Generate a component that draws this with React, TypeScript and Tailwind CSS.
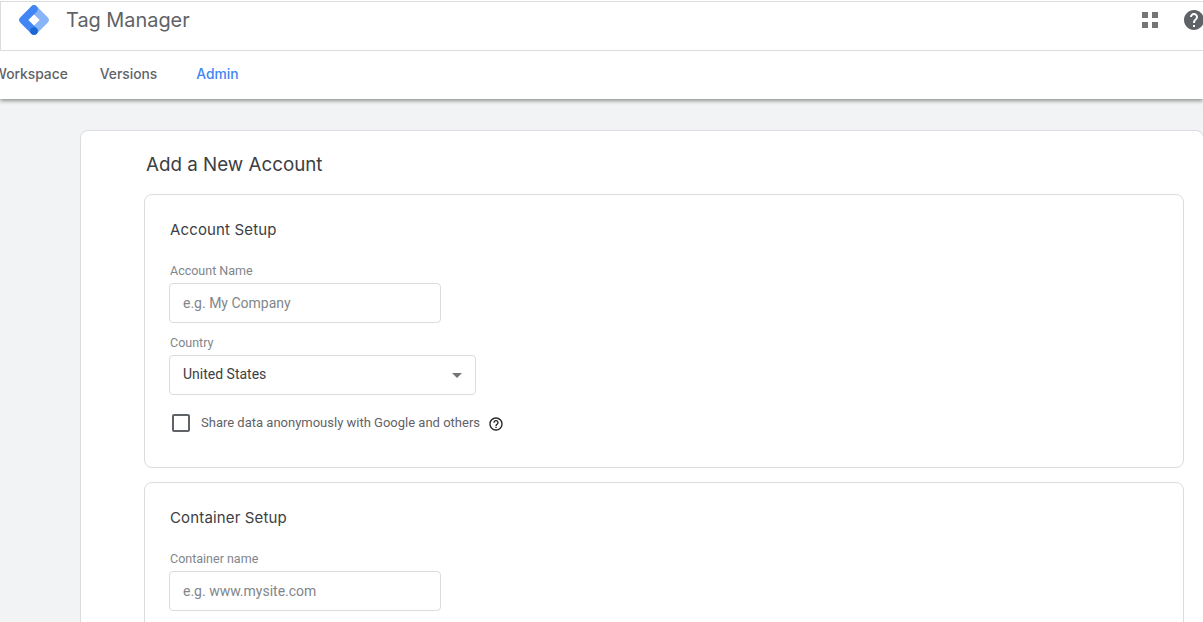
const labelClass = "block text-[12.5px] leading-[14px] text-[#80868b] font-['Roboto',sans-serif]";
const inputClass =
  "block h-10 w-[272px] rounded border border-[#dadce0] bg-white px-[13px] text-sm text-[#3c4043] outline-none placeholder:text-[#80868b] font-['Roboto',sans-serif]";
const cardTitleClass = "ml-px text-[15px] leading-5 tracking-[0.15px] text-[#3c4043] font-['Inter',sans-serif]";

function Logo() {
  return (
    <svg width="30" height="30" viewBox="0 0 30 30" className="shrink-0">
      <path d="M15 4 L26 15 L15 26" fill="none" stroke="#8ab4f8" strokeWidth="7.5" strokeLinejoin="round" strokeLinecap="round" />
      <path d="M15 4 L4 15 L15 26" fill="none" stroke="#4285f4" strokeWidth="7.5" strokeLinejoin="round" strokeLinecap="round" />
      <circle cx="15" cy="26" r="3.8" fill="#1967d2" />
    </svg>
  );
}

function AppsIcon() {
  return (
    <div className="grid shrink-0 grid-cols-[6px_6px] grid-rows-[6px_6px] gap-1">
      <span className="bg-[#757575]" />
      <span className="bg-[#757575]" />
      <span className="bg-[#757575]" />
      <span className="bg-[#757575]" />
    </div>
  );
}

function HelpFilled() {
  return (
    <svg width="24" height="24" viewBox="0 0 24 24" fill="#5f6368" className="shrink-0">
      <path d="M12 2C6.48 2 2 6.48 2 12s4.48 10 10 10 10-4.48 10-10S17.52 2 12 2zm1 17h-2v-2h2v2zm2.07-7.75l-.9.92C13.45 12.9 13 13.5 13 15h-2v-.5c0-1.1.45-2.1 1.17-2.83l1.24-1.26c.37-.36.59-.86.59-1.41 0-1.1-.9-2-2-2s-2 .9-2 2H8c0-2.21 1.79-4 4-4s4 1.79 4 4c0 .88-.36 1.68-.93 2.25z" />
    </svg>
  );
}

function HelpOutline() {
  return (
    <svg width="16" height="16" viewBox="0 0 24 24" fill="#202124" className="shrink-0">
      <path d="M11 18h2v-2h-2v2zm1-16C6.48 2 2 6.48 2 12s4.48 10 10 10 10-4.48 10-10S17.52 2 12 2zm0 18c-4.41 0-8-3.59-8-8s3.59-8 8-8 8 3.59 8 8-3.59 8-8 8zm0-14c-2.21 0-4 1.79-4 4h2c0-1.1.9-2 2-2s2 .9 2 2c0 2-3 1.75-3 5h2c0-2.25 3-2.5 3-5 0-2.21-1.79-4-4-4z" />
    </svg>
  );
}

export default function App() {
  return (
    <div className="h-screen overflow-hidden bg-[#f1f3f4]">
      <div className="relative z-10 bg-white pt-px shadow-[0_2px_4px_rgba(0,0,0,0.4)]">
        <header className="flex h-[50px] items-center overflow-hidden border-y border-l border-[#dcdcdc] pb-[12px] pl-[18px]">
          <Logo />
          <span className="ml-[17px] text-[19.9px] leading-7 text-[#5f6368] font-['Inter',sans-serif]">Tag Manager</span>
          <div className="ml-auto flex items-center">
            <AppsIcon />
            <div className="ml-6 -mr-[3px]">
              <HelpFilled />
            </div>
          </div>
        </header>
        <nav className="flex h-[48px] items-center pb-0.5 text-[13.8px] font-medium text-[#5f6368] font-['Inter',sans-serif]">
          <span className="-ml-[7px]">Workspace</span>
          <span className="ml-8">Versions</span>
          <span className="ml-[39px] text-[#4285f4]">Admin</span>
        </nav>
      </div>

      <main className="ml-20 mt-[31px] w-[1124px] rounded-lg border border-[#dadce0] bg-white pl-[63px] pr-[19px] pt-[22px]">
        <h1 className="ml-0.5 text-[18.8px] leading-6 text-[#3c4043] font-['Inter',sans-serif]">Add a New Account</h1>

        <section className="mt-[17px] h-[274px] rounded-lg border border-[#dadce0] px-6 pt-[25px]">
          <h2 className={cardTitleClass}>Account Setup</h2>
          <label className={`${labelClass} ml-px mt-[24px]`}>Account Name</label>
          <input className={`${inputClass} mt-[5px]`} placeholder="e.g. My Company" />
          <label className={`${labelClass} ml-px mt-[13px]`}>Country</label>
          <div className="mt-[5px] flex h-10 w-[307px] items-center justify-between rounded border border-[#dadce0] pb-0.5 pl-[13px] pr-[13px] text-sm text-[#3c4043] font-['Roboto',sans-serif]">
            <span>United States</span>
            <span className="mt-[3px] h-0 w-0 border-x-[5px] border-t-[5px] border-x-transparent border-t-[#757575]" />
          </div>
          <div className="ml-[3px] mt-[18px] flex items-center">
            <span className="h-[18px] w-[18px] rounded-[2px] border-2 border-[#5f6368]" />
            <span className="ml-[11px] text-[13px] text-[#5f6368] font-['Roboto',sans-serif]">Share data anonymously with Google and others</span>
            <span className="ml-2 mt-0.5">
              <HelpOutline />
            </span>
          </div>
        </section>

        <section className="mt-[14px] h-[300px] rounded-lg border border-[#dadce0] px-6 pt-[25px]">
          <h2 className={cardTitleClass}>Container Setup</h2>
          <label className={`${labelClass} ml-px mt-[24px]`}>Container name</label>
          <input className={`${inputClass} mt-[5px]`} placeholder="e.g. www.mysite.com" />
        </section>
      </main>
    </div>
  );
}
